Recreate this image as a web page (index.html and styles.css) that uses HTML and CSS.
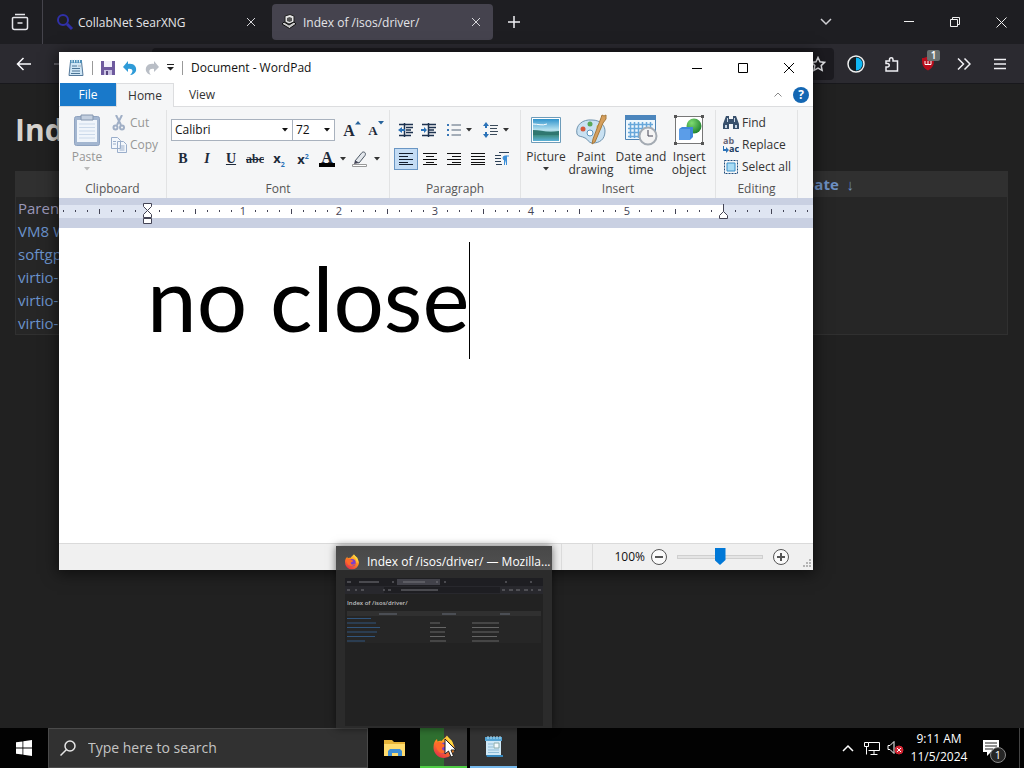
FILE: index.html
```html
<!DOCTYPE html>
<html lang="en">
<head>
<meta charset="utf-8">
<title>Index of /isos/driver/</title>
<link rel="stylesheet" href="styles.css">
</head>
<body>
<svg class="defs" width="0" height="0" aria-hidden="true">
  <defs>
    <linearGradient id="sky" x1="0" y1="0" x2="0" y2="1"><stop offset="0" stop-color="#2f93cc"/><stop offset=".5" stop-color="#b9e3f0"/><stop offset=".75" stop-color="#3f8f86"/><stop offset="1" stop-color="#5db2d8"/></linearGradient>
    <linearGradient id="fire" x1=".8" y1="0" x2=".2" y2="1"><stop offset="0" stop-color="#ffe14a"/><stop offset=".45" stop-color="#ff8a1f"/><stop offset="1" stop-color="#e3264f"/></linearGradient>
    <radialGradient id="ball" cx=".35" cy=".3" r=".8"><stop offset="0" stop-color="#7fdc72"/><stop offset="1" stop-color="#177a28"/></radialGradient>
    <pattern id="dots" y="7" width="12" height="13" patternUnits="userSpaceOnUse"><rect x="4" y="5" width="1" height="2" fill="#445"/></pattern>
    <symbol id="firefox" viewBox="0 0 24 24">
      <path d="M12 23A10.500 10.500 0 0 1 1.500 12C1.500 8 3 5.500 5 4l.5 2.500C7 5.500 8.500 5.500 9.500 6 11 4 13 3 15 .5c1 3 3.500 4 5 6.500 1.500 2 2.500 4 2.500 6A10.500 10.500 0 0 1 12 23z" fill="url(#fire)"/>
      <circle cx="12" cy="13" r="5.500" fill="#7a3fd0"/>
      <path d="M3 9c3-3 6-2 8 0l3 1c-1 2-3 2-4 3 0 3 4 4 7 1-1 5-10 6-12 0z" fill="#ff6a2a"/>
      <path d="M15 1c0 5 5 6 4 13 3-3 2-8 0-9z" fill="#ffd83e"/>
    </symbol>
    <symbol id="pad" viewBox="0 0 16 18">
      <path d="M2.500 2.500h11l1.500 14H1z" fill="#cfe6f5" stroke="#54789a"/>
      <path d="M2 1h12v3H2z" fill="#4f8fb8"/><path d="M4 .5v3M6.500.5v3M9 .5v3M11.500.5v3" stroke="#e4f3fa"/>
      <path d="M4 7h5M4 9.500h8M4 12h8M3 14.500h9" stroke="#4c7596"/><path d="M10 6h3v2h-3z" fill="#b9c6d0"/>
    </symbol>
    <symbol id="down" viewBox="0 0 6 4"><path d="M0 0h6L3 3.500z" fill="currentColor"/></symbol>
  </defs>
</svg>

<main class="browser">
  <header class="tabstrip">
    <button class="icon-btn view-btn" aria-label="Recent browsing"><svg width="18" height="18" viewBox="0 0 18 18" fill="none" stroke="#e6e6ea" stroke-width="1.500"><path d="M4 1.500h10M2.500 4.500h13a1 1 0 0 1 1 1v9a2 2 0 0 1-2 2h-11a2 2 0 0 1-2-2v-9a1 1 0 0 1 1-1zM6.500 10h5"/></svg></button>
    <div class="tab">
      <svg width="18" height="18" viewBox="0 0 18 18" fill="none" stroke="#3030a8" stroke-width="2"><circle cx="7" cy="7" r="5"/><path d="M11 11l5 5" stroke-width="3"/></svg>
      <span class="tab-title">CollabNet SearXNG</span>
      <button class="icon-btn close" aria-label="Close tab"><svg width="10" height="10" viewBox="0 0 10 10" stroke="#d6d6da"><path d="M1 1l8 8M9 1l-8 8"/></svg></button>
    </div>
    <div class="tab active">
      <svg width="16" height="16" viewBox="0 0 16 16"><path d="M4 2l5-1.500 4 1.500v6l-5 2-4-2z" fill="#e5e5e5" stroke="#222"/><path d="M6 4l2.500-1 2.500 1v3L8.500 8 6 7z" fill="#555"/><path d="M1 10l2-2 5 3 5-3 2 2-6.500 4.500z" fill="#c8c8c8" stroke="#111"/></svg>
      <span class="tab-title">Index of /isos/driver/</span>
      <button class="icon-btn close" aria-label="Close tab"><svg width="10" height="10" viewBox="0 0 10 10" stroke="#d6d6da"><path d="M1 1l8 8M9 1l-8 8"/></svg></button>
    </div>
    <button class="icon-btn new-tab" aria-label="New tab"><svg width="12" height="12" viewBox="0 0 12 12" stroke="#f0f0f4" stroke-width="1.500"><path d="M6 0v12M0 6h12"/></svg></button>
    <span class="spring"></span>
    <button class="icon-btn list-btn" aria-label="List all tabs"><svg width="12" height="8" viewBox="0 0 12 8" fill="none" stroke="#d0d0d4" stroke-width="1.500"><path d="M1 1l5 5 5-5"/></svg></button>
    <button class="icon-btn win-btn" aria-label="Minimize"><svg width="10" height="10" viewBox="0 0 10 10" stroke="#f0f0f0"><path d="M0 4.500h10"/></svg></button>
    <button class="icon-btn win-btn" aria-label="Restore"><svg width="10" height="10" viewBox="0 0 10 10" fill="none" stroke="#f0f0f0"><path d="M.5 2.500h7v7h-7zM2.500 2.500v-2h7v7h-2"/></svg></button>
    <button class="icon-btn win-btn" aria-label="Close"><svg width="11" height="11" viewBox="0 0 11 11" stroke="#f0f0f0"><path d="M.5.5l10 10M10.500.5l-10 10"/></svg></button>
  </header>
  <div class="toolbar">
    <button class="icon-btn nav-btn" aria-label="Back"><svg width="16" height="14" viewBox="0 0 16 14" fill="none" stroke="#fbfbfe" stroke-width="1.500"><path d="M7.500 1l-6 6 6 6M1.500 7H15"/></svg></button>
    <button class="icon-btn nav-btn" aria-label="Forward"><svg width="16" height="14" viewBox="0 0 16 14" fill="none" stroke="#77767e" stroke-width="1.500"><path d="M8.500 1l6 6-6 6M14.500 7H1"/></svg></button>
    <div class="urlbar"><button class="icon-btn" aria-label="Bookmark"><svg width="16" height="16" viewBox="0 0 16 16" fill="none" stroke="#e8e8ec" stroke-width="1.500"><path d="M8 1.500l2 4.300 4.600.6-3.400 3.200.9 4.700L8 12l-4.100 2.300.9-4.700L1.400 6.400 6 5.800z"/></svg></button></div>
    <button class="icon-btn ext" aria-label="Dark mode"><svg width="18" height="18" viewBox="0 0 18 18"><circle cx="9" cy="9" r="8" fill="#141e24" stroke="#f0f0f0" stroke-width="1.500"/><path d="M9 2.500a6.500 6.500 0 0 1 0 13z" fill="#10b8f4"/></svg></button>
    <button class="icon-btn ext" aria-label="Extensions"><svg width="16" height="16" viewBox="0 0 16 16" fill="none" stroke="#f0f0f4" stroke-width="1.500"><path d="M2 5h3.500V3.500a1.700 1.700 0 0 1 3.500 0V5h4.500v10H2v-4h1.500a1.700 1.700 0 0 0 0-3.500H2z"/></svg></button>
    <button class="icon-btn ext" aria-label="Content blocker"><svg width="14" height="15" viewBox="0 0 14 15"><path d="M7 0c2 1.500 4 2 6 2 0 6 0 9-6 12.500C1 11 1 8 1 2c2 0 4-.5 6-2z" fill="#b80d1c"/><path d="M4 5v3.500h3V5M7 8.500h3V5" fill="none" stroke="#fff"/></svg><span class="badge">1</span></button>
    <button class="icon-btn ext" aria-label="More tools"><svg width="14" height="12" viewBox="0 0 14 12" fill="none" stroke="#f0f0f4" stroke-width="1.500"><path d="M1 .5L6.500 6 1 11.500M7.500.5L13 6l-5.500 5.500"/></svg></button>
    <button class="icon-btn ext" aria-label="Menu"><svg width="12" height="12" viewBox="0 0 12 12" stroke="#f0f0f4" stroke-width="1.500"><path d="M0 1.500h12M0 6h12M0 10.500h12"/></svg></button>
  </div>
  <section class="page">
    <h1>Index of /isos/driver/</h1>
    <table class="listing">
      <thead><tr><th>File Name &nbsp;↓</th><th>File Size &nbsp;↓</th><th>Date &nbsp;↓</th></tr></thead>
      <tbody>
        <tr><td><a class="parent" href="#">Parent</a></td><td></td><td></td></tr>
        <tr><td><a href="#">VM8 W</a></td><td></td><td></td></tr>
        <tr><td><a href="#">softgp</a></td><td></td><td></td></tr>
        <tr><td><a href="#">virtio-</a></td><td></td><td></td></tr>
        <tr><td><a href="#">virtio-</a></td><td></td><td></td></tr>
        <tr><td><a href="#">virtio-</a></td><td></td><td></td></tr>
      </tbody>
    </table>
  </section>
</main>

<section class="wordpad" aria-label="Document - WordPad">
  <header class="titlebar">
    <svg width="16" height="18"><use href="#pad"/></svg>
    <i class="bar"></i>
    <button aria-label="Save"><svg width="14" height="14" viewBox="0 0 14 14"><path d="M0 0h14v14H0z" fill="#6e5a9e"/><path d="M3 0h8v6H3z" fill="#f2f0fa"/><path d="M3 9h8v5H3z" fill="#c9c2e2"/><path d="M5 10h2v4H5z" fill="#57457f"/></svg></button>
    <button aria-label="Undo"><svg width="14" height="14" viewBox="0 0 14 14"><path d="M5 0v3c6-1 9 3 8 7-1 2-3 4-6 4 4-3 3-7-2-6v3L0 6z" fill="#2f9bd8"/></svg></button>
    <button aria-label="Redo"><svg width="14" height="14" viewBox="0 0 14 14"><path d="M9 0v3C3 2 0 6 1 10c1 2 2 3 5 4-3-3-2-7 3-6v3l5-5z" fill="#b9bec6"/></svg></button>
    <button aria-label="Customize toolbar"><svg width="7" height="7" viewBox="0 0 7 7"><path d="M0 0h7v1H0zM0 3h7L3.500 6.500z" fill="#222"/></svg></button>
    <i class="bar"></i>
    <span class="title">Document - WordPad</span>
    <span class="spring"></span>
    <button class="wp-win" aria-label="Minimize"><svg width="10" height="10" viewBox="0 0 10 10" stroke="#000"><path d="M0 5.500h10"/></svg></button>
    <button class="wp-win" aria-label="Maximize"><svg width="10" height="10" viewBox="0 0 10 10" fill="none" stroke="#000"><path d="M.5.5h9v9h-9z"/></svg></button>
    <button class="wp-win" aria-label="Close"><svg width="10" height="10" viewBox="0 0 10 10" stroke="#000"><path d="M0 0l10 10M10 0L0 10"/></svg></button>
  </header>
  <nav class="ribbon-tabs">
    <button class="file">File</button><button class="home">Home</button><button>View</button>
    <span class="spring"></span>
    <button class="collapse" aria-label="Collapse ribbon"><svg width="8" height="5" viewBox="0 0 8 5" fill="none" stroke="#888"><path d="M.5 4.500L4 1l3.500 3.500"/></svg></button>
    <button class="help" aria-label="Help">?</button>
  </nav>
  <div class="ribbon">
    <div class="group clipboard">
      <div class="body">
        <button class="big" disabled><svg width="26" height="32" viewBox="0 0 26 32"><rect x=".5" y="2.500" width="25" height="29" rx="2" fill="#a3b6d0" stroke="#8fa3c0"/><path d="M3 6h20v22H3z" fill="#f0f5fb"/><path d="M5 10h16M5 13.500h16M5 17h16M5 20.500h16M5 24h16" stroke="#cbd9ea"/><path d="M7 1h12v5H7z" fill="#c3cfdf" stroke="#8496ae"/></svg><span>Paste</span><svg class="arr" width="6" height="4"><use href="#down"/></svg></button>
        <div class="stack">
          <button disabled><svg width="16" height="16" viewBox="0 0 16 16" fill="none" stroke="#a0afc6" stroke-width="2"><path d="M5 0l5 10M11 0L6 10"/><circle cx="4.500" cy="12.500" r="2"/><circle cx="11" cy="12.500" r="2"/></svg>Cut</button>
          <button disabled><svg width="16" height="16" viewBox="0 0 16 16" fill="#f3f7fc" stroke="#9aaecb"><path d="M.5.5h6l3 3v8h-9zM6.500 4.500h6l3 3v8h-9z"/><path d="M2 4.500h3M2 7h3M8.500 9h5M8.500 11h5M8.500 13h5"/></svg>Copy</button>
        </div>
      </div>
      <div class="label">Clipboard</div>
    </div>
    <div class="group font">
      <div class="body rows">
        <div class="row">
          <span class="combo family"><select aria-label="Font family"><option>Calibri</option></select><svg width="6" height="4"><use href="#down"/></svg></span><span class="combo size"><select aria-label="Font size"><option>72</option></select><svg width="6" height="4"><use href="#down"/></svg></span>
          <button class="tool grow" aria-label="Grow font"><b class="serif g1">A</b><svg width="6" height="4" viewBox="0 0 6 4"><path d="M0 3.500h6L3 0z" fill="#27639c"/></svg></button>
          <button class="tool grow" aria-label="Shrink font"><b class="serif g2">A</b><svg width="6" height="4" viewBox="0 0 6 4"><path d="M0 0h6L3 3.500z" fill="#27639c"/></svg></button>
        </div>
        <div class="row">
          <button class="tool serif"><b>B</b></button><button class="tool serif"><b><i>I</i></b></button><button class="tool serif"><b><u>U</u></b></button><button class="tool serif"><s>abc</s></button>
          <button class="tool"><span class="x">x<sub>2</sub></span></button><button class="tool"><span class="x">x<sup>2</sup></span></button>
          <button class="tool color" aria-label="Text color"><b class="serif">A</b></button><button class="drop" aria-label="Text color menu"><svg width="6" height="4"><use href="#down"/></svg></button>
          <button class="tool mark" aria-label="Highlight"><svg width="16" height="16" viewBox="0 0 16 16"><path d="M3 10L10 1.500c2-1.500 4.500.5 3 3L7 12z" fill="#e3e7ec" stroke="#4d5865"/><path d="M3 9.500l4 2.500-5 1z" fill="#445"/><path d="M.5 13.500h14v2H.5z" fill="#fff" stroke="#999"/></svg></button><button class="drop" aria-label="Highlight menu"><svg width="6" height="4"><use href="#down"/></svg></button>
        </div>
      </div>
      <div class="label">Font</div>
    </div>
    <div class="group para">
      <div class="body rows">
        <div class="row">
          <button class="tool" aria-label="Decrease indent"><svg width="16" height="14" viewBox="0 0 16 14"><path d="M1 1.500h14M8 4.500h7M8 7h5M8 9.500h7M1 12.500h12M6.500 0v14" stroke="#1e3350" stroke-width="1.500"/><path d="M0 7l4-3v2h3v2H4v2z" fill="#2a72b8"/></svg></button>
          <button class="tool" aria-label="Increase indent"><svg width="16" height="14" viewBox="0 0 16 14"><path d="M1 1.500h14M8 4.500h7M8 7h5M8 9.500h7M1 12.500h12M7.500 0v14" stroke="#1e3350" stroke-width="1.500"/><path d="M6 7L3 4v2H0v2h3v2z" fill="#2a72b8"/></svg></button>
          <button class="tool wide" aria-label="Bullets"><svg width="16" height="14" viewBox="0 0 16 14"><path d="M1 1h2v2H1zM1 6h2v2H1zM1 11h2v2H1z" fill="#3a78b8"/><path d="M5.500 2H15M5.500 7H15M5.500 12H15" stroke="#536579"/></svg><svg width="6" height="4"><use href="#down"/></svg></button>
          <button class="tool wide" aria-label="Line spacing"><svg width="16" height="16" viewBox="0 0 16 16"><path d="M3 0l3 4H4v2H2V4H0zM3 16l3-4H4v-2H2v2H0z" fill="#2a72b8"/><path d="M7 3.500h8M7 6.500h7M7 9.500h8M7 12.500h7" stroke="#3d4c5c"/></svg><svg width="6" height="4"><use href="#down"/></svg></button>
        </div>
        <div class="row">
          <button class="tool on" aria-label="Align left"><svg width="16" height="12" viewBox="0 0 16 12" stroke="#111c2c"><path d="M1 .5h14M1 3.500h9M1 6.500h14M1 9.500h9M1 11.500h14"/></svg></button>
          <button class="tool" aria-label="Center"><svg width="14" height="12" viewBox="0 0 14 12" stroke="#111"><path d="M0 .5h14M3 3.500h8M0 6.500h14M3 9.500h8M0 11.500h14"/></svg></button>
          <button class="tool" aria-label="Align right"><svg width="14" height="12" viewBox="0 0 14 12" stroke="#111"><path d="M0 .5h14M5 3.500h9M0 6.500h14M5 9.500h9M0 11.500h14"/></svg></button>
          <button class="tool" aria-label="Justify"><svg width="14" height="12" viewBox="0 0 14 12" stroke="#111"><path d="M0 .5h14M0 3.500h14M0 6.500h14M0 9.500h14M0 11.500h14"/></svg></button>
          <button class="tool" aria-label="Paragraph"><svg width="14" height="14" viewBox="0 0 14 14" stroke="#2c4055"><path d="M4 .5h10M0 3.500h6M0 6.500h6M0 9.500h6M1 12.500h6"/><path d="M11.500 13V4H10a2 2 0 0 0 0 4M9.500 13V4M11 4h3" fill="#3d8fd8" stroke="#3d8fd8"/></svg></button>
        </div>
      </div>
      <div class="label">Paragraph</div>
    </div>
    <div class="group insert">
      <div class="body">
        <button class="big w44"><svg width="32" height="32" viewBox="0 0 32 32"><path d="M1.500 3.500h29v25h-29z" fill="#fff" stroke="#6d9cba"/><path d="M3 5h26v22H3z" fill="url(#sky)"/><path d="M3 16c8 0 14 3 26 1v4H3z" fill="#2f7770"/><path d="M3 10c5 0 9 2 14 0" stroke="#fff" fill="none"/></svg><span>Picture</span><svg class="arr" width="6" height="4"><use href="#down"/></svg></button>
        <button class="big w46"><svg width="32" height="32" viewBox="0 0 32 32"><path d="M2 20C0 11 8 5 17 6c9 0 13 6 13 11 0 9-6 12-12 12-5 0-5-4-8-5-3-2-7-1-8-4z" fill="#c9e1f2" stroke="#6f93ae"/><circle cx="8" cy="15" r="2.500" fill="#d5583c"/><circle cx="15" cy="10" r="2.500" fill="#58a858"/><circle cx="24" cy="13" r="2.500" fill="#e6b83a"/><circle cx="15" cy="19" r="3" fill="#fff" stroke="#5e95bd"/><path d="M26 4l1-3 2 1 2-1v4l-3 4L20 28l-3 2 1-5z" fill="#d69f5c" stroke="#a5793c"/></svg><span>Paint drawing</span></button>
        <button class="big w54"><svg width="34" height="32" viewBox="0 0 34 32"><path d="M1.500 1.500h30v24h-30z" fill="#eef7fd" stroke="#4e83b4"/><path d="M1 1h31v5H1z" fill="#4c86bd"/><path d="M4 10.500h25M4 14.500h25M4 18.500h25M4 22.500h25M6.500 8v16M10.500 8v16M14.500 8v16M18.500 8v16M22.500 8v16M26.500 8v16" stroke="#67a7da" stroke-width="1.500"/><circle cx="24" cy="22" r="8.500" fill="#f4f4f4" stroke="#a4abb3" stroke-width="2"/><path d="M24 16v6h5" fill="none" stroke="#445"/></svg><span>Date and time</span></button>
        <button class="big w40"><svg width="30" height="32" viewBox="0 0 30 32"><path d="M1.500 2.500h27v27h-27z" fill="#fff" stroke="#777"/><circle cx="20" cy="12" r="7.500" fill="url(#ball)"/><path d="M5 15l3-2h11v10l-3 3H5z" fill="#3f87dc"/><path d="M5 15h11v11H5z" fill="#5b9de8"/><path d="M0 1h3v3H0zM27 1h3v3h-3zM0 28h3v3H0zM27 28h3v3h-3z" fill="#555"/></svg><span>Insert object</span></button>
      </div>
      <div class="label">Insert</div>
    </div>
    <div class="group editing">
      <div class="body">
        <div class="stack">
          <button><svg width="16" height="14" viewBox="0 0 16 14"><path d="M3 0h3v3h4V0h3l3 8v5h-6V8H6v5H0V8z" fill="#38506c"/><path d="M2 9h2v3H2zM12 9h2v3h-2zM4 2h1v4H4zM11 2h1v4h-1z" fill="#c7d5e4"/></svg>Find</button>
          <button><svg width="16" height="16" viewBox="0 0 16 16"><text x="0" y="7" class="ab">ab</text><text x="6" y="15" class="ac">ac</text><path d="M1 9v3h2v-2l3 3-3 3v-2H0V9z" fill="#2a72b8"/></svg>Replace</button>
          <button><svg width="16" height="16" viewBox="0 0 16 16"><path d="M1.500 1.500h13v13h-13z" fill="none" stroke="#1f4d7d" stroke-dasharray="2 1"/><path d="M4 4h8v8H4z" fill="#a9dcf5" stroke="#3b8fc7"/></svg>Select all</button>
        </div>
      </div>
      <div class="label">Editing</div>
    </div>
  </div>
  <div class="ruler">
    <svg width="754" height="30" viewBox="0 0 754 30">
      <path d="M0 7h754v13H0z" fill="#dfe5f2"/><path d="M88 7h576v13H88z" fill="#fff"/>
      <path d="M0 7h754v13H0z" fill="url(#dots)"/>
      <path d="M40.500 11v5M136.500 11v5M232.500 11v5M328.500 11v5M424.500 11v5M520.500 11v5M616.500 11v5M712.500 11v5" stroke="#445"/>
      <g class="nums"><rect x="179" y="8" width="10" height="11"/><rect x="275" y="8" width="10" height="11"/><rect x="371" y="8" width="10" height="11"/><rect x="467" y="8" width="10" height="11"/><rect x="563" y="8" width="10" height="11"/>
      <text x="184" y="17">1</text><text x="280" y="17">2</text><text x="376" y="17">3</text><text x="472" y="17">4</text><text x="568" y="17">5</text></g>
      <path d="M84.500 5.500h8v3l-4 4-4-4zM84.500 19.500v-3l4-4 4 4v3zM84.500 20.500h8v5h-8zM660.500 20.500v-3l4-4 4 4v3zM664.500 6v7" fill="#fff" stroke="#445"/>
    </svg>
  </div>
  <div class="document" contenteditable="true" role="textbox" aria-label="Document"><p><span>no close</span><span class="caret"></span></p></div>
  <footer class="status">
    <span class="cell"></span>
    <span class="zoom-value">100%</span>
    <button class="round" aria-label="Zoom out"><svg width="16" height="16" viewBox="0 0 16 16" fill="#fafafa" stroke="#555"><circle cx="8" cy="8" r="7.500"/><path d="M4 8h8" stroke-width="2"/></svg></button>
    <input type="range" aria-label="Zoom" min="0" max="100" value="50">
    <button class="round" aria-label="Zoom in"><svg width="16" height="16" viewBox="0 0 16 16" fill="#fafafa" stroke="#555"><circle cx="8" cy="8" r="7.500"/><path d="M4 8h8M8 4v8" stroke-width="2"/></svg></button>
    <svg class="grip" width="9" height="9" viewBox="0 0 9 9" fill="#b4b4b4"><path d="M7 0h2v2H7zM7 3h2v2H7zM7 6h2v2H7zM4 3h2v2H4zM4 6h2v2H4zM1 6h2v2H1z"/></svg>
  </footer>
</section>

<aside class="preview">
  <header><svg width="16" height="16"><use href="#firefox"/></svg><span>Index of /isos/driver/ — Mozilla...</span></header>
  <svg class="thumb" viewBox="0 0 198 148">
    <path d="M0 0h198v148H0z" fill="#222"/><path d="M0 0h198v8H0z" fill="#1e1e22"/><path d="M0 8h198v8H0z" fill="#28282d"/><path d="M52 1h43v6H52z" fill="#42424a"/><path d="M39 9h116v6H39z" fill="#1e1e22"/>
    <path d="M2 4h4M14 4h20M47 4h2M58 4h22M91 4h2M99 4h2M160 4h2M185 4h2M2 12h3M10 12h2M16 12h3M38 12h2M43 12h3M56 12h37M157 12h3M164 12h4M171 12h4M179 12h4M186 12h2M193 12h3" stroke="#77777d"/>
    <text x="2" y="27">Index of /isos/driver/</text>
    <path d="M2 33h194v5H2z" fill="#303030"/><path d="M2 38h194v27H2z" fill="#262626"/>
    <path d="M34 36h18M97 36h14M155 36h10" stroke="#666d78"/>
    <path d="M2 40.500h24M2 45h29M2 49.500h33M2 54h30M2 58.500h28M2 63h18" stroke="#31557c"/>
    <path d="M85 45h10M85 49.500h16M85 54h15M85 58.500h15M85 63h16M127 45h27M127 49.500h27M127 54h27M127 58.500h25M127 63h27" stroke="#666"/>
  </svg>
</aside>

<footer class="taskbar">
  <button class="start" aria-label="Start"><svg width="16" height="16" viewBox="0 0 16 16" fill="#fff"><path d="M0 2.300l6.500-.9v6.100H0zM7.300 1.200L16 0v7.500H7.300zM0 8.400h6.500v6.200L0 13.700zM7.300 8.400H16V16l-8.700-1.200z"/></svg></button>
  <label class="search"><svg width="16" height="16" viewBox="0 0 16 16" fill="none" stroke="#e6e6e6" stroke-width="1.500"><circle cx="10" cy="6" r="5"/><path d="M6.500 9.500L.5 15.500"/></svg><input type="text" placeholder="Type here to search" aria-label="Type here to search"></label>
  <button class="app explorer" aria-label="File Explorer"><svg width="22" height="18" viewBox="0 0 22 18"><path d="M0 1h8l2 2h11v14H0z" fill="#e8b53a"/><path d="M0 5h21v12H0z" fill="#ffdc6e"/><path d="M4 17v-5l2-2h10l2 2v5h-4v-3H8v3z" fill="#3f8fd6"/></svg></button>
  <button class="app fx" aria-label="Firefox"><svg width="24" height="24"><use href="#firefox"/></svg></button>
  <button class="app wp" aria-label="WordPad"><svg width="20" height="22" viewBox="0 0 20 22"><path d="M2 3h15v16H2z" fill="#cfe8f6"/><path d="M1 1h17v4H1z" fill="#55a4d3"/><path d="M4 0v3M7 0v3M10 0v3M13 0v3M16 0v3" stroke="#b7dff2"/><path d="M4 8h5M4 11h5M4 14h11M4 16.500h11" stroke="#8fbdd8"/><path d="M10 7h5v5h-5z" fill="#f4fafd" stroke="#8aa"/><path d="M2 19h17v2H3z" fill="#3688be"/></svg></button>
  <span class="spring"></span>
  <button class="tray" aria-label="Show hidden icons"><svg width="12" height="8" viewBox="0 0 12 8" fill="none" stroke="#fff" stroke-width="1.500"><path d="M1 7l5-5 5 5"/></svg></button>
  <button class="tray" aria-label="Network"><svg width="16" height="14" viewBox="0 0 16 14" fill="none" stroke="#fff"><path d="M4.500 1.500h11v8h-11M10 10v3M6.500 13.500h7M.5 1.500h4v4h-4zM2.500 5.500v8"/></svg></button>
  <button class="tray" aria-label="Volume muted"><svg width="18" height="14" viewBox="0 0 18 14" fill="none" stroke="#fff"><path d="M1 4.500h2l4-4v12l-4-4H1z"/><circle cx="12" cy="9" r="4" fill="#d32533" stroke="#d32533"/><path d="M10 7l4 4M14 7l-4 4"/></svg></button>
  <time class="clock" datetime="2024-11-05T09:11"><span>9:11 AM</span><span>11/5/2024</span></time>
  <button class="notify" aria-label="Notifications"><svg width="18" height="18" viewBox="0 0 18 18"><path d="M1 1h16v12H9l-4 4v-4H1z" fill="#fff"/><path d="M3 4h12M3 7h12M3 10h8" stroke="#222"/></svg><span class="count">1</span></button>
</footer>
<svg class="cursor" width="13" height="20" viewBox="0 0 13 20"><path d="M1 1v15l3.500-3 2.500 6 2.500-1L7 12h5z" fill="#fff" stroke="#222"/></svg>
</body>
</html>
```
FILE: styles.css
```css
* { box-sizing: border-box; }
body {
  margin: 0;
  height: 100vh;
  display: flex;
  flex-direction: column;
  overflow: hidden;
  position: relative;
  background: #222;
  font: 12px/16px "Open Sans", "Noto Sans", sans-serif;
}
button {
  font: inherit;
  color: inherit;
  background: none;
  border: 0;
  padding: 0;
  display: flex;
  align-items: center;
  justify-content: center;
}
svg { display: block; flex: none; }
.defs { position: absolute; }
.spring { flex: 1; }

/* Browser */
.browser { flex: 1; min-height: 0; display: flex; flex-direction: column; color: #e4e4e8; }
.tabstrip { display: flex; align-items: center; height: 44px; background: #1e1e22; }
.view-btn { width: 43px; height: 44px; padding-right: 2px; border-right: 1px solid #45444c; }
.tab { display: flex; align-items: center; gap: 4px; width: 221px; height: 36px; margin-left: 4px; padding: 0 12px 0 9px; border-radius: 4px; }
.tab.active { background: #45434e; gap: 6px; }
.tab-title { flex: 1; padding-top: 2px; white-space: nowrap; }
.new-tab { width: 42px; height: 36px; }
.list-btn { width: 32px; margin-right: 44px; }
.win-btn { width: 46px; height: 44px; }
.toolbar { display: flex; align-items: center; height: 40px; padding: 0 6px 0 8px; background: #2b2a30; border-bottom: 1px solid #18181c; }
.nav-btn { width: 32px; height: 32px; margin-right: 5px; }
.urlbar { flex: 1; display: flex; justify-content: flex-end; align-items: center; height: 32px; margin: 0 4px 0 70px; padding-right: 8px; border-radius: 4px; background: #1c1b20; }
.ext { width: 36px; height: 32px; position: relative; }
.badge { position: absolute; top: 2px; right: 6px; width: 13px; height: 11px; border-radius: 2px; background: #67706f; color: #fff; font-size: 10px; line-height: 11px; font-weight: 600; }
.page { flex: 1; padding: 25px 16px 0 15px; background: #212121; }
.page h1 { margin: 0 0 20px; font-size: 30px; line-height: 42px; font-weight: 700; color: #d6d3ce; }
.listing { width: 100%; table-layout: fixed; border-collapse: collapse; background: #262626; border: 1px solid #303030; font-size: 15px; line-height: 20px; }
.listing th { height: 25px; padding: 0; background: #303030; color: #6d90c4; }
.listing th:nth-child(1) { width: 43%; }
.listing th:nth-child(2) { width: 21%; }
.listing td { height: 23px; padding: 1px 2px; }
.listing a { color: #6b93cc; text-decoration: none; }
.listing a.parent { color: #9a97b8; }

/* WordPad window */
.wordpad { position: absolute; left: 59px; top: 52px; width: 754px; height: 518px; display: flex; flex-direction: column; background: #fff; color: #333; box-shadow: 0 2px 14px 2px rgba(0, 0, 0, .55); overflow: hidden; }
.titlebar { display: flex; align-items: center; gap: 8px; height: 31px; padding-left: 9px; }
.titlebar .bar { width: 1px; height: 14px; background: #999; }
.titlebar .title { color: #111; }
.titlebar .wp-win { width: 46px; height: 30px; margin-left: -8px; }
.wp-win:last-child { margin-right: 1px; }
.ribbon-tabs { display: flex; align-items: stretch; height: 24px; border-bottom: 1px solid #dcdddf; }
.ribbon-tabs button { width: 56px; }
.ribbon-tabs .file { margin-left: 1px; background: #1979ca; color: #fff; }
.ribbon-tabs .home { width: 58px; background: #f5f6f7; border: 1px solid #dcdddf; border-bottom: 0; margin-bottom: -1px; }
.ribbon-tabs .collapse { width: 20px; }
.ribbon-tabs .help { align-self: center; width: 16px; height: 16px; margin: 0 4px 0 5px; border-radius: 50%; background: #1467b3; color: #fff; font-weight: 700; }
.ribbon { display: flex; height: 91px; background: #f5f6f7; }
.group { display: flex; flex-direction: column; border-right: 1px solid #e2e3e4; margin: 3px 0 0; }
.group .body { flex: 1; display: flex; align-items: flex-start; padding-top: 4px; }
.group .label { text-align: center; color: #555; height: 17px; line-height: 16px; }
.clipboard { width: 108px; }
.clipboard .body { padding-left: 8px; }
.clipboard button { color: #969696; }
.clipboard .arr { color: #bbb; }
.font { width: 223px; }
.para { width: 131px; }
.insert { width: 195px; }
.insert .body { padding-left: 2px; }
.editing { width: 82px; }
.editing .body { padding-left: 7px; }
.big { flex-direction: column; justify-content: flex-start; width: 40px; line-height: 13px; }
.big span { margin-top: 4px; }
.big .arr { margin-top: 4px; }
.w44 { width: 46px; }
.w46 { width: 44px; }
.w54 { width: 56px; }
.w40 { width: 40px; }
.stack { display: flex; flex-direction: column; margin-top: -2px; }
.stack button { height: 22px; gap: 3px; justify-content: flex-start; white-space: nowrap; }
.clipboard .stack { padding-left: 4px; }
.ab { font: 700 9px "Open Sans", sans-serif; fill: #667; }
.ac { font: 700 9px "Open Sans", sans-serif; fill: #183a5e; }
.group .body.rows { flex-direction: column; gap: 7px; padding: 9px 3px 0 4px; }
.row { display: flex; align-items: center; height: 22px; }
.combo { position: relative; display: flex; align-items: center; height: 22px; border: 1px solid #a9b2be; background: #fff; }
.combo svg { position: absolute; right: 4px; pointer-events: none; color: #111; }
.combo select { appearance: none; width: 100%; height: 20px; padding: 0 3px; border: 0; background: none; font: inherit; color: #111; }
.combo.family { width: 122px; }
.combo.size { width: 43px; margin: 0 5px 0 -1px; }
.tool { width: 24px; height: 22px; }
.grow { align-items: flex-start; padding-top: 2px; }
.serif { font-family: "Liberation Serif", serif; color: #1e2a3a; }
.tool.serif { font-size: 14px; }
.tool.serif s { font-size: 12px; font-weight: 700; }
.g1 { font-size: 16px; line-height: 19px; }
.g2 { font-size: 13px; line-height: 20px; }
.x { font-weight: 700; font-size: 13px; line-height: 14px; color: #1e2a3a; }
.x sub, .x sup { font-size: 7px; line-height: 7px; color: #2a72b8; }
.color b { font-size: 16px; line-height: 13px; height: 16px; border-bottom: 4px solid #000; padding: 0 2px; }
.drop { width: 8px; height: 22px; }
.mark { width: 26px; }
.para .tool { width: 23px; }
.para .tool.wide { width: 37px; gap: 4px; }
.para .row:nth-child(2) .tool { width: 24px; }
.tool.on { border: 1px solid #6a96c4; background: #c4dcf4; }
.ruler { height: 30px; background: #c9d0e2; }
.nums rect { fill: #fff; }
.nums text { font: 11px "Open Sans", sans-serif; fill: #445; text-anchor: middle; }
.document { flex: 1; min-height: 0; padding: 14px 88px 0 88px; outline: 0; color: #000; }
.document p { display: flex; height: 117px; margin: 0; font: 89px/112px Lato, sans-serif; white-space: nowrap; }
.caret { width: 1px; background: #000; }
.status { display: flex; align-items: center; height: 27px; padding-right: 2px; justify-content: flex-end; background: #f0f0f0; border-top: 1px solid #dadada; color: #111; }
.status .cell { width: 32px; height: 26px; margin-right: 21px; border: 1px solid #dcdcdc; border-width: 0 1px; }
.zoom-value { margin-right: 6px; }
.status input { appearance: none; width: 86px; height: 20px; margin: 0 10px; background: none; }
.status input::-webkit-slider-runnable-track { height: 4px; border: 1px solid #cfcfcf; background: #e4e4e4; }
.status input::-webkit-slider-thumb { appearance: none; width: 11px; height: 17px; margin-top: -8px; background: #0078d7; clip-path: polygon(0 0, 100% 0, 100% 70%, 50% 100%, 0 70%); }
.grip { align-self: flex-end; margin: 0 0 2px 13px; }

/* Taskbar window preview */
.preview { position: absolute; left: 336px; bottom: 40px; width: 216px; height: 182px; background: linear-gradient(#484848, #505050 24px, #2b2b2b 24px); box-shadow: 0 0 8px rgba(0, 0, 0, .55); color: #fff; overflow: hidden; }
.preview header { display: flex; align-items: center; gap: 7px; height: 32px; padding-left: 8px; white-space: nowrap; }
.thumb { width: 198px; height: 148px; margin-left: 9px; }
.thumb text { font: 600 6px "Open Sans", sans-serif; fill: #bfbfbf; }

/* Taskbar */
.taskbar { display: flex; align-items: stretch; height: 40px; background: #020202; color: #fff; }
.start { width: 48px; }
.search { display: flex; align-items: center; gap: 12px; width: 320px; padding-left: 11px; background: #313131; border: 1px solid #4a4a4a; }
.search input { flex: 1; min-width: 0; border: 0; padding: 0; background: none; outline: 0; font: 14px/20px "Open Sans", sans-serif; color: #fff; }
.search input::placeholder { color: #c4c4c4; opacity: 1; }
.app { width: 47px; }
.explorer { width: 52px; padding-left: 2px; }
.fx { background: linear-gradient(90deg, #2f7030 0 24px, #3b3b3b 24px); border-bottom: 2px solid #4fce45; }
.wp { margin-left: 3px; background: #333; border-bottom: 2px solid #76b9ed; }
.tray { width: 24px; }
.clock { display: flex; flex-direction: column; justify-content: center; align-items: center; width: 62px; line-height: 18px; white-space: nowrap; }
.notify { position: relative; width: 50px; margin-right: 4px; padding-right: 8px; border-right: 1px solid #444; }
.count { position: absolute; right: 13px; bottom: 5px; width: 16px; height: 16px; border: 1px solid #888; border-radius: 50%; background: #262626; font-size: 11px; line-height: 14px; }
.cursor { position: absolute; left: 444px; bottom: 10px; }
```
